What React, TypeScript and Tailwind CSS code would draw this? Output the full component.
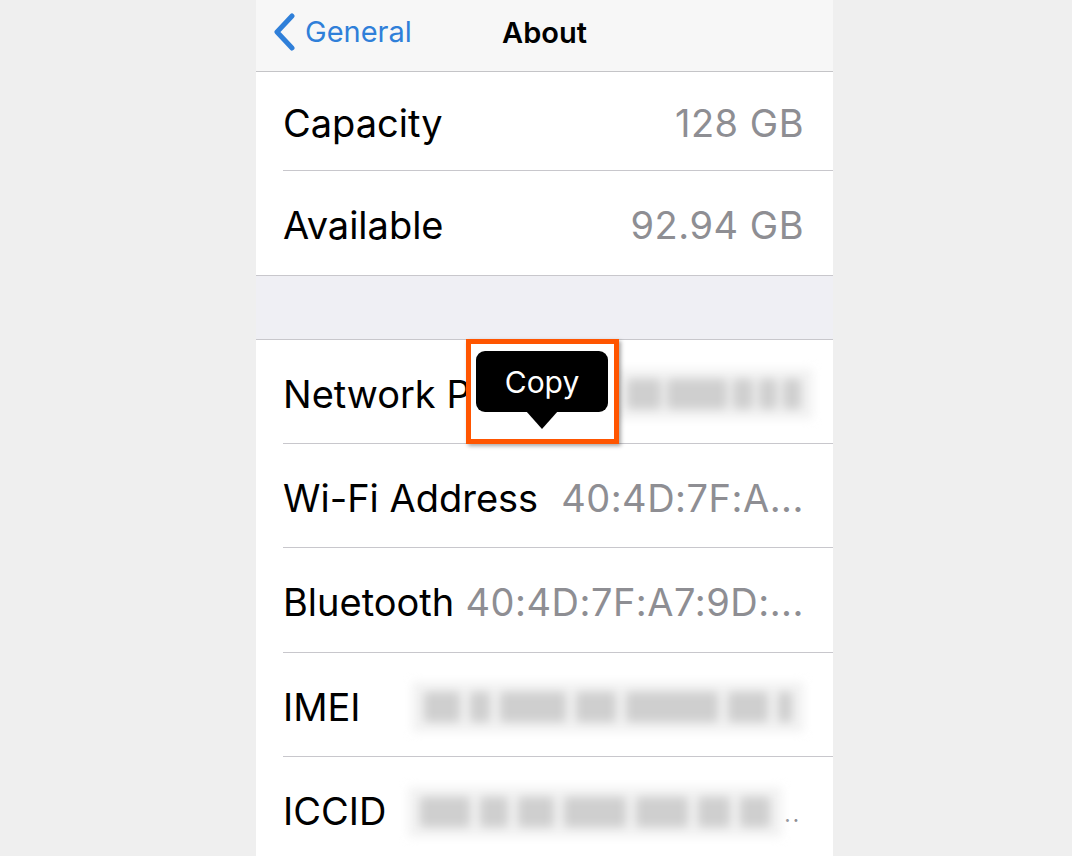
import React from "react";

type Row = {
  label: string
  value?: string
  blur?: number[]
  h?: string
}

const topRows: Row[] = [
  { label: "Capacity", value: "128 GB", h: "h-[99px]" },
  { label: "Available", value: "92.94 GB", h: "h-[104px]" },
]

const bottomRows: Row[] = [
  { label: "Wi-Fi Address", value: "40:4D:7F:A..." },
  { label: "Bluetooth", value: "40:4D:7F:A7:9D:...", h: "h-[105px]" },
  { label: "IMEI", blur: [36, 20, 66, 40, 92, 40, 14] },
  { label: "ICCID", blur: [50, 28, 36, 62, 52, 32, 30] },
]

// blurred-out serial numbers
function Smudge({ parts, gap = 10 }: { parts: number[]; gap?: number }) {
  return (
    <div className="flex items-center blur-[5px] bg-[#f2f2f2] px-[12px] py-[10px] rounded" style={{ gap }}>
      {parts.map((w, i) => (
        <div key={i} className="h-[30px] bg-[#cfcfcf] rounded-sm" style={{ width: w }} />
      ))}
    </div>
  )
}

function SettingRow({ row, last }: { row: Row; last?: boolean }) {
  const iccid = row.label === "ICCID"
  return (
    <div className="pl-[27px]">
      <div className={`${row.h ?? "h-[104px]"} flex items-center justify-between ${iccid ? "pr-[32px]" : "pr-[29px]"} pt-[5px] ${last ? "" : "border-b border-[#c8c7cc]"}`}>
        <span className="text-[38px] text-black whitespace-nowrap">{row.label}</span>
        {row.value && (
          <span className="text-[38px] text-[#8e8e93] whitespace-nowrap tracking-[0.5px]">{row.value}</span>
        )}
        {row.blur && (
          <span className="flex items-end">
            <Smudge parts={row.blur} />
            {iccid && <span className="text-[22px] text-[#8e8e93] leading-none mb-[12px] ml-[2px] tracking-[2px]">..</span>}
          </span>
        )}
      </div>
    </div>
  )
}

export default function App() {
  return (
    <div className="w-full h-[856px] bg-[#efefef] pl-[256px] overflow-hidden" style={{ fontFamily: "Inter, 'Noto Sans', sans-serif" }}>
      <div className="w-[577px] h-full bg-white flex flex-col">
        {/* nav bar */}
        <div className="relative h-[72px] bg-[#f7f7f7] border-b border-[#c4c4c7] flex items-center shrink-0 pb-[8px]">
          <div className="flex items-center pl-[16px] gap-[9px] text-[#2f7fd9]">
            <svg width="24" height="38" viewBox="0 0 24 38" fill="none">
              <path d="M20 3 L5 19 L20 35" stroke="currentColor" strokeWidth="5" strokeLinecap="round" strokeLinejoin="round" />
            </svg>
            <span className="text-[29px]">General</span>
          </div>
          <span className="absolute left-0 right-0 top-[11px] text-center text-[29px] font-semibold text-black pointer-events-none">About</span>
        </div>

        {/* capacity group */}
        <div className="border-b border-[#c8c7cc]">
          {topRows.map((r, i) => (
            <SettingRow key={r.label} row={r} last={i === topRows.length - 1} />
          ))}
        </div>

        <div className="h-[64px] bg-[#efeff4] border-b border-[#c8c7cc] shrink-0" />

        {/* network group */}
        <div className="pl-[27px]">
          <div className="relative h-[104px] flex items-center justify-between pr-[20px] pt-[5px] border-b border-[#c8c7cc]">
            <span className="text-[38px] text-black whitespace-nowrap">Network P</span>
            <Smudge parts={[34, 60, 20, 18, 18]} gap={6} />

            {/* highlighted copy callout */}
            <div className="absolute left-[183px] -top-px w-[153px] h-[105px] border-[5px] border-[#ff5500] shadow-[2px_2px_4px_rgba(0,0,0,0.35)] bg-white">
              <div className="relative mt-[7px] ml-[5px] w-[132px] h-[61px] bg-black rounded-[9px] flex items-center justify-center">
                <span className="text-white text-[30px] mt-[1px]">Copy</span>
                <div className="absolute left-1/2 -translate-x-1/2 top-[60px] w-0 h-0 border-l-[16px] border-r-[16px] border-t-[18px] border-l-transparent border-r-transparent border-t-black" />
              </div>
            </div>
          </div>
        </div>
        {bottomRows.map((r, i) => (
          <SettingRow key={r.label} row={r} last={i === bottomRows.length - 1} />
        ))}
        <div className="border-t border-[#c8c7cc]" />
      </div>
    </div>
  )
}
